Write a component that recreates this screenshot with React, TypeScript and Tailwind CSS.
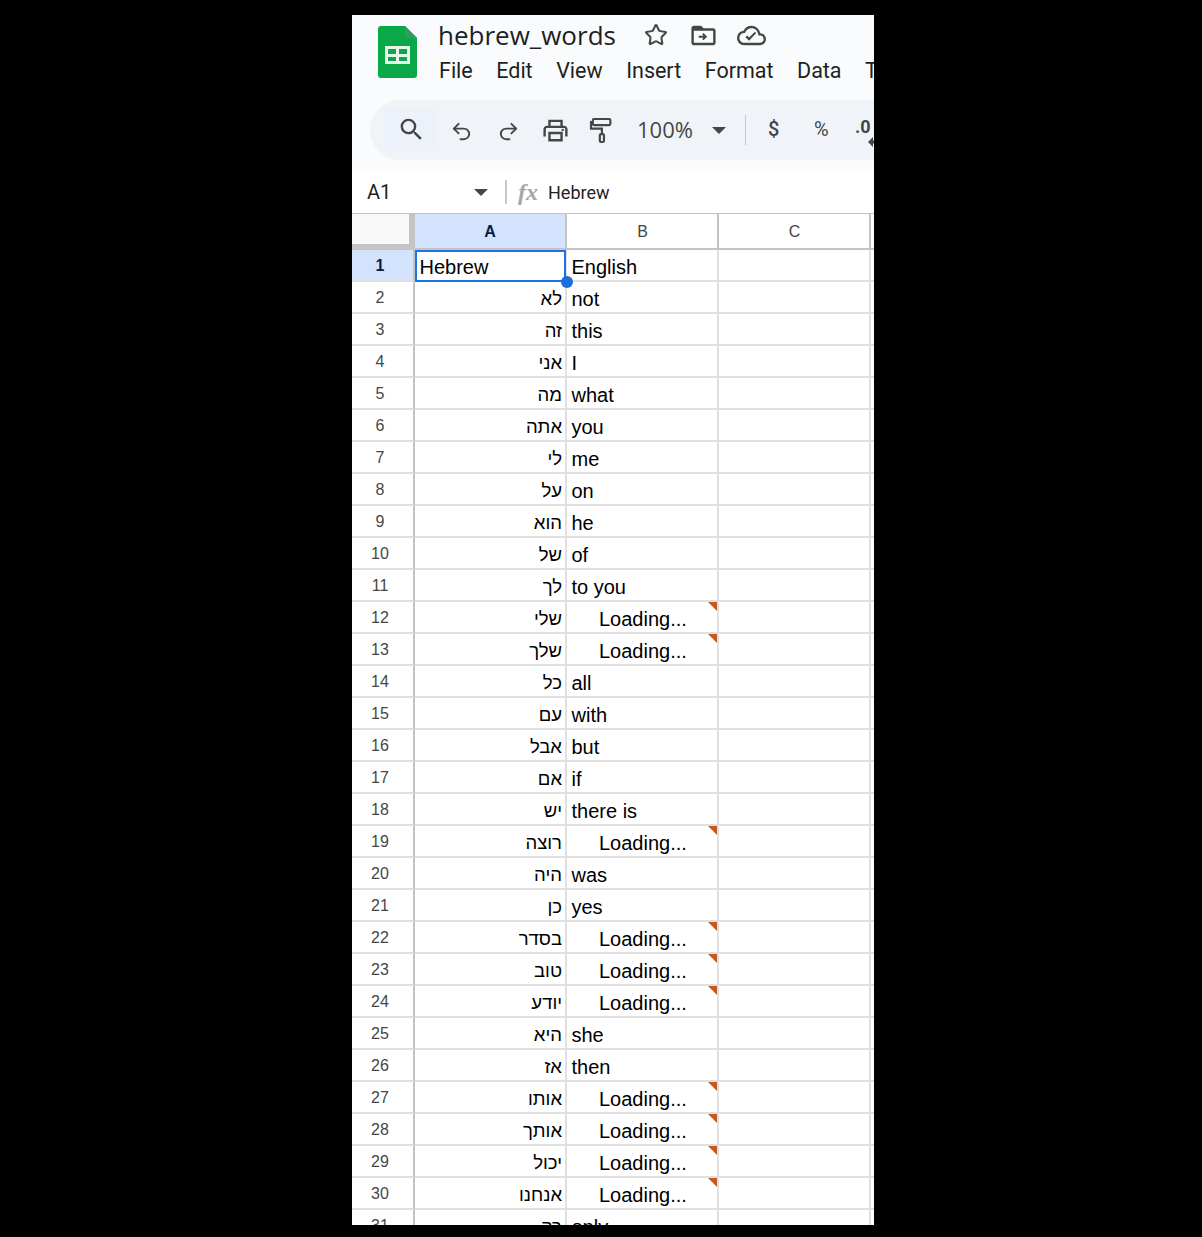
import { Star, Undo2, Redo2 } from "lucide-react";

// null in the English slot means the GOOGLETRANSLATE call is still pending
const ROWS: [string, string | null][] = [
  ["Hebrew", "English"],
  ["לא", "not"],
  ["זה", "this"],
  ["אני", "I"],
  ["מה", "what"],
  ["אתה", "you"],
  ["לי", "me"],
  ["על", "on"],
  ["הוא", "he"],
  ["של", "of"],
  ["לך", "to you"],
  ["שלי", null],
  ["שלך", null],
  ["כל", "all"],
  ["עם", "with"],
  ["אבל", "but"],
  ["אם", "if"],
  ["יש", "there is"],
  ["רוצה", null],
  ["היה", "was"],
  ["כן", "yes"],
  ["בסדר", null],
  ["טוב", null],
  ["יודע", null],
  ["היא", "she"],
  ["אז", "then"],
  ["אותו", null],
  ["אותך", null],
  ["יכול", null],
  ["אנחנו", null],
  ["רק", "only"],
];

const MENU = ["File", "Edit", "View", "Insert", "Format", "Data", "Tools"];

function SheetsLogo() {
  return (
    <svg width="39" height="52" viewBox="0 0 39 52" className="mt-[11px] shrink-0">
      <path d="M3 0H27L39 12V49a3 3 0 0 1-3 3H3a3 3 0 0 1-3-3V3a3 3 0 0 1 3-3z" fill="#0ba84a" />
      <path d="M27 0L39 12H27z" fill="#2f9e5c" />
      <path d="M7 20H32V38H7zM10 23V28H18V23zM21 23V28H29V23zM10 31V35H18V31zM21 31V35H29V31z" fill="#e8f5ec" fillRule="evenodd" />
    </svg>
  );
}

function SearchIcon() {
  return (
    <svg width="29" height="29" viewBox="0 0 24 24" fill="#444746">
      <path d="M15.5 14h-.79l-.28-.27A6.471 6.471 0 0 0 16 9.5 6.5 6.5 0 1 0 9.5 16c1.61 0 3.09-.59 4.23-1.57l.27.28v.79l5 4.99L20.49 19l-4.99-5zm-6 0C7.01 14 5 11.99 5 9.5S7.01 5 9.5 5 14 7.01 14 9.5 11.99 14 9.5 14z" />
    </svg>
  );
}

function PrintIcon() {
  return (
    <svg width="29" height="29" viewBox="0 0 24 24" fill="#444746">
      <path d="M19 8h-1V3H6v5H5c-1.66 0-3 1.34-3 3v6h4v4h12v-4h4v-6c0-1.66-1.34-3-3-3zM8 5h8v3H8V5zm8 14H8v-4h8v4zm2-2v-4H6v4H4v-6c0-.55.45-1 1-1h14c.55 0 1 .45 1 1v6h-2z" />
      <circle cx="18" cy="11.5" r="1" />
    </svg>
  );
}

function PaintIcon() {
  return (
    <svg width="29" height="29" viewBox="0 0 24 24" fill="none" stroke="#444746" strokeWidth="1.8">
      <rect x="4" y="2.5" width="14.5" height="5" rx="1" />
      <path d="M4 5H2.5v5.5h9V15" />
      <rect x="9.8" y="15" width="3.4" height="6.5" rx="1" />
    </svg>
  );
}

function FolderMoveIcon() {
  return (
    <svg width="29" height="29" viewBox="0 0 24 24" fill="#444746">
      <path d="M20 6h-8l-2-2H4c-1.1 0-2 .9-2 2v12c0 1.1.9 2 2 2h16c1.1 0 2-.9 2-2V8c0-1.1-.9-2-2-2zm0 12H4V8h16v10z" />
      <path d="M12 10l-1.1 1.1 1.1 1.1H8v1.6h4l-1.1 1.1L12 16l3-3z" />
    </svg>
  );
}

function CloudDoneIcon() {
  return (
    <svg width="29" height="29" viewBox="0 0 24 24" fill="#444746">
      <path d="M19.35 10.04A7.49 7.49 0 0 0 12 4C9.11 4 6.6 5.64 5.35 8.04A5.994 5.994 0 0 0 0 14c0 3.31 2.69 6 6 6h13c2.76 0 5-2.24 5-5 0-2.64-2.05-4.78-4.65-4.96zM19 18H6c-2.21 0-4-1.79-4-4 0-2.05 1.53-3.76 3.56-3.97l1.07-.11.5-.95A5.469 5.469 0 0 1 12 6c2.62 0 4.88 1.86 5.39 4.43l.3 1.5 1.53.11A2.98 2.98 0 0 1 22 15c0 1.65-1.35 3-3 3z" />
      <path d="M10 16.4l-3-3 1.4-1.4 1.6 1.6 4.6-4.6L16 10z" />
    </svg>
  );
}

function Caret() {
  return <div className="h-0 w-0 shrink-0 border-x-[7px] border-t-[7px] border-x-transparent border-t-[#444746]" />;
}

function ToolButton({ children }: { children: React.ReactNode }) {
  return <div className="flex h-[30px] w-[47px] shrink-0 items-center justify-center">{children}</div>;
}

function Header() {
  return (
    <div className="h-[157px] shrink-0 bg-[#f9fbfd] font-['Roboto',sans-serif]">
      <div className="flex h-[85px] pl-[26px]">
        <SheetsLogo />
        <div className="ml-[21px] min-w-0 pt-[2px]">
          <div className="flex h-[36px] items-center">
            <span className="w-[194px] shrink-0 font-['Open_Sans',sans-serif] text-[26px] leading-[28px] text-[#1f1f1f]">hebrew_words</span>
            <div className="flex w-[47px] justify-center">
              <Star size={24} strokeWidth={2} color="#444746" />
            </div>
            <div className="flex w-[48px] justify-center">
              <FolderMoveIcon />
            </div>
            <div className="flex w-[48px] justify-center">
              <CloudDoneIcon />
            </div>
          </div>
          <div className="mt-[4px] flex gap-[23.5px] whitespace-nowrap pl-[1px] text-[21.5px] leading-[28px] text-[#1f1f1f]">
            {MENU.map((m) => (
              <span key={m}>{m}</span>
            ))}
          </div>
        </div>
      </div>
      <div className="ml-[18px] flex h-[60px] w-[560px] items-center overflow-hidden rounded-[30px] bg-[#f0f4f9]">
        <div className="ml-[14px] flex h-[42px] w-[54px] shrink-0 items-center justify-center bg-[#edf2fa] pb-[2px]">
          <SearchIcon />
        </div>
        <ToolButton>
          <Undo2 size={23} strokeWidth={2} color="#444746" className="mt-[2px]" />
        </ToolButton>
        <ToolButton>
          <Redo2 size={23} strokeWidth={2} color="#444746" className="mt-[2px]" />
        </ToolButton>
        <ToolButton>
          <PrintIcon />
        </ToolButton>
        <ToolButton>
          <PaintIcon />
        </ToolButton>
        <span className="ml-[11px] mb-[2px] w-[74px] shrink-0 font-['Open_Sans',sans-serif] text-[22px] text-[#444746]">100%</span>
        <div className="ml-[1px]">
          <Caret />
        </div>
        <div className="ml-[19px] h-[30px] w-px shrink-0 bg-[#c7c7c7]" />
        <span className="ml-[22px] mb-[3px] w-[47px] shrink-0 text-[20px] font-medium text-[#444746]">$</span>
        <span className="-ml-[1px] mb-[3px] w-[42px] shrink-0 text-[20px] text-[#444746]">%</span>
        <span className="relative -ml-[1px] mb-[8px] shrink-0 text-[18px] font-bold text-[#444746]">
          .0
          <svg width="14" height="10" viewBox="0 0 14 10" fill="#444746" className="absolute -bottom-[7px] left-[13px]">
            <path d="M5 0L0 5l5 5V6.5h9v-3H5z" />
          </svg>
        </span>
      </div>
    </div>
  );
}

function FormulaBar() {
  return (
    <div className="flex h-[41px] shrink-0 items-center bg-white pb-[1px] font-['Roboto',sans-serif]">
      <span className="ml-[15px] w-[107px] text-[20px] text-[#1f1f1f]">A1</span>
      <Caret />
      <div className="ml-[17px] h-[24px] w-[2px] bg-[#c7c7c7]" />
      <span className="ml-[11px] w-[30px] font-['Liberation_Serif',serif] text-[24px] font-bold italic text-[#a6a6a6]">fx</span>
      <span className="text-[18px] text-[#1f1f1f]">Hebrew</span>
    </div>
  );
}

function ColumnHeaders() {
  return (
    <div className="flex h-[37px] shrink-0 border-t border-[#c4c4c4] font-['Liberation_Sans',sans-serif] text-[16px] leading-[36px]">
      <div className="h-full w-[63px] border-b-[6px] border-r-[6px] border-[#c4c4c4] bg-[#f8f8f8]" />
      <div className="h-full w-[152px] border-b-2 border-r-2 border-[#c4c4c4] bg-[#d3e3fd] text-center font-bold text-[#041e49]">A</div>
      <div className="h-full w-[152px] border-b-2 border-r-2 border-[#c4c4c4] pl-[1px] text-center text-[#444746]">B</div>
      <div className="h-full w-[152px] border-b-2 border-r-2 border-[#c4c4c4] pl-[1px] text-center text-[#444746]">C</div>
      <div className="h-full flex-1 border-b-2 border-[#c4c4c4]" />
    </div>
  );
}

function Row({ n, hebrew, english }: { n: number; hebrew: string; english: string | null }) {
  const first = n === 1;
  return (
    <div className="flex h-8 shrink-0 font-['Liberation_Sans',sans-serif] text-[20px] leading-[34px] text-black">
      <div
        className={`h-full w-[63px] border-b-2 border-r-2 border-b-[#e0e0e0] border-r-[#c4c4c4] pr-[5px] text-center text-[16px] leading-[32px] ${
          first ? "bg-[#d3e3fd] font-bold text-[#041e49]" : "text-[#444746]"
        }`}
      >
        {n}
      </div>
      <div className={`relative h-full w-[152px] border-b-2 border-r-2 border-[#e0e0e0] ${first ? "pl-[4.5px] text-left" : "pr-[3px] text-right text-[18.5px]"}`}>
        {hebrew}
        {first && (
          <>
            <div className="absolute left-0 top-0 h-8 w-[151px] border-2 border-[#1a73e8]" />
            <div className="absolute -bottom-[8px] -right-[8px] z-10 h-[12px] w-[12px] rounded-full bg-[#1a6fd8]" />
          </>
        )}
      </div>
      <div className="relative h-full w-[152px] border-b-2 border-r-2 border-[#e0e0e0] pl-[4.5px]">
        {english === null ? (
          <>
            <span className="pl-[27.5px]">Loading...</span>
            <div className="absolute right-0 top-0 h-0 w-0 border-l-[9px] border-t-[9px] border-l-transparent border-t-[#c05a1e]" />
          </>
        ) : (
          english
        )}
      </div>
      <div className="h-full w-[152px] border-b-2 border-r-2 border-[#e0e0e0]" />
      <div className="h-full flex-1 border-b-2 border-[#e0e0e0]" />
    </div>
  );
}

export default function App() {
  return (
    <div className="h-[1237px] bg-black pl-[352px] pt-[15px]">
      <div className="flex h-[1210px] w-[522px] flex-col overflow-hidden bg-white">
        <Header />
        <FormulaBar />
        <ColumnHeaders />
        {ROWS.map(([hebrew, english], i) => (
          <Row key={i} n={i + 1} hebrew={hebrew} english={english} />
        ))}
      </div>
    </div>
  );
}
